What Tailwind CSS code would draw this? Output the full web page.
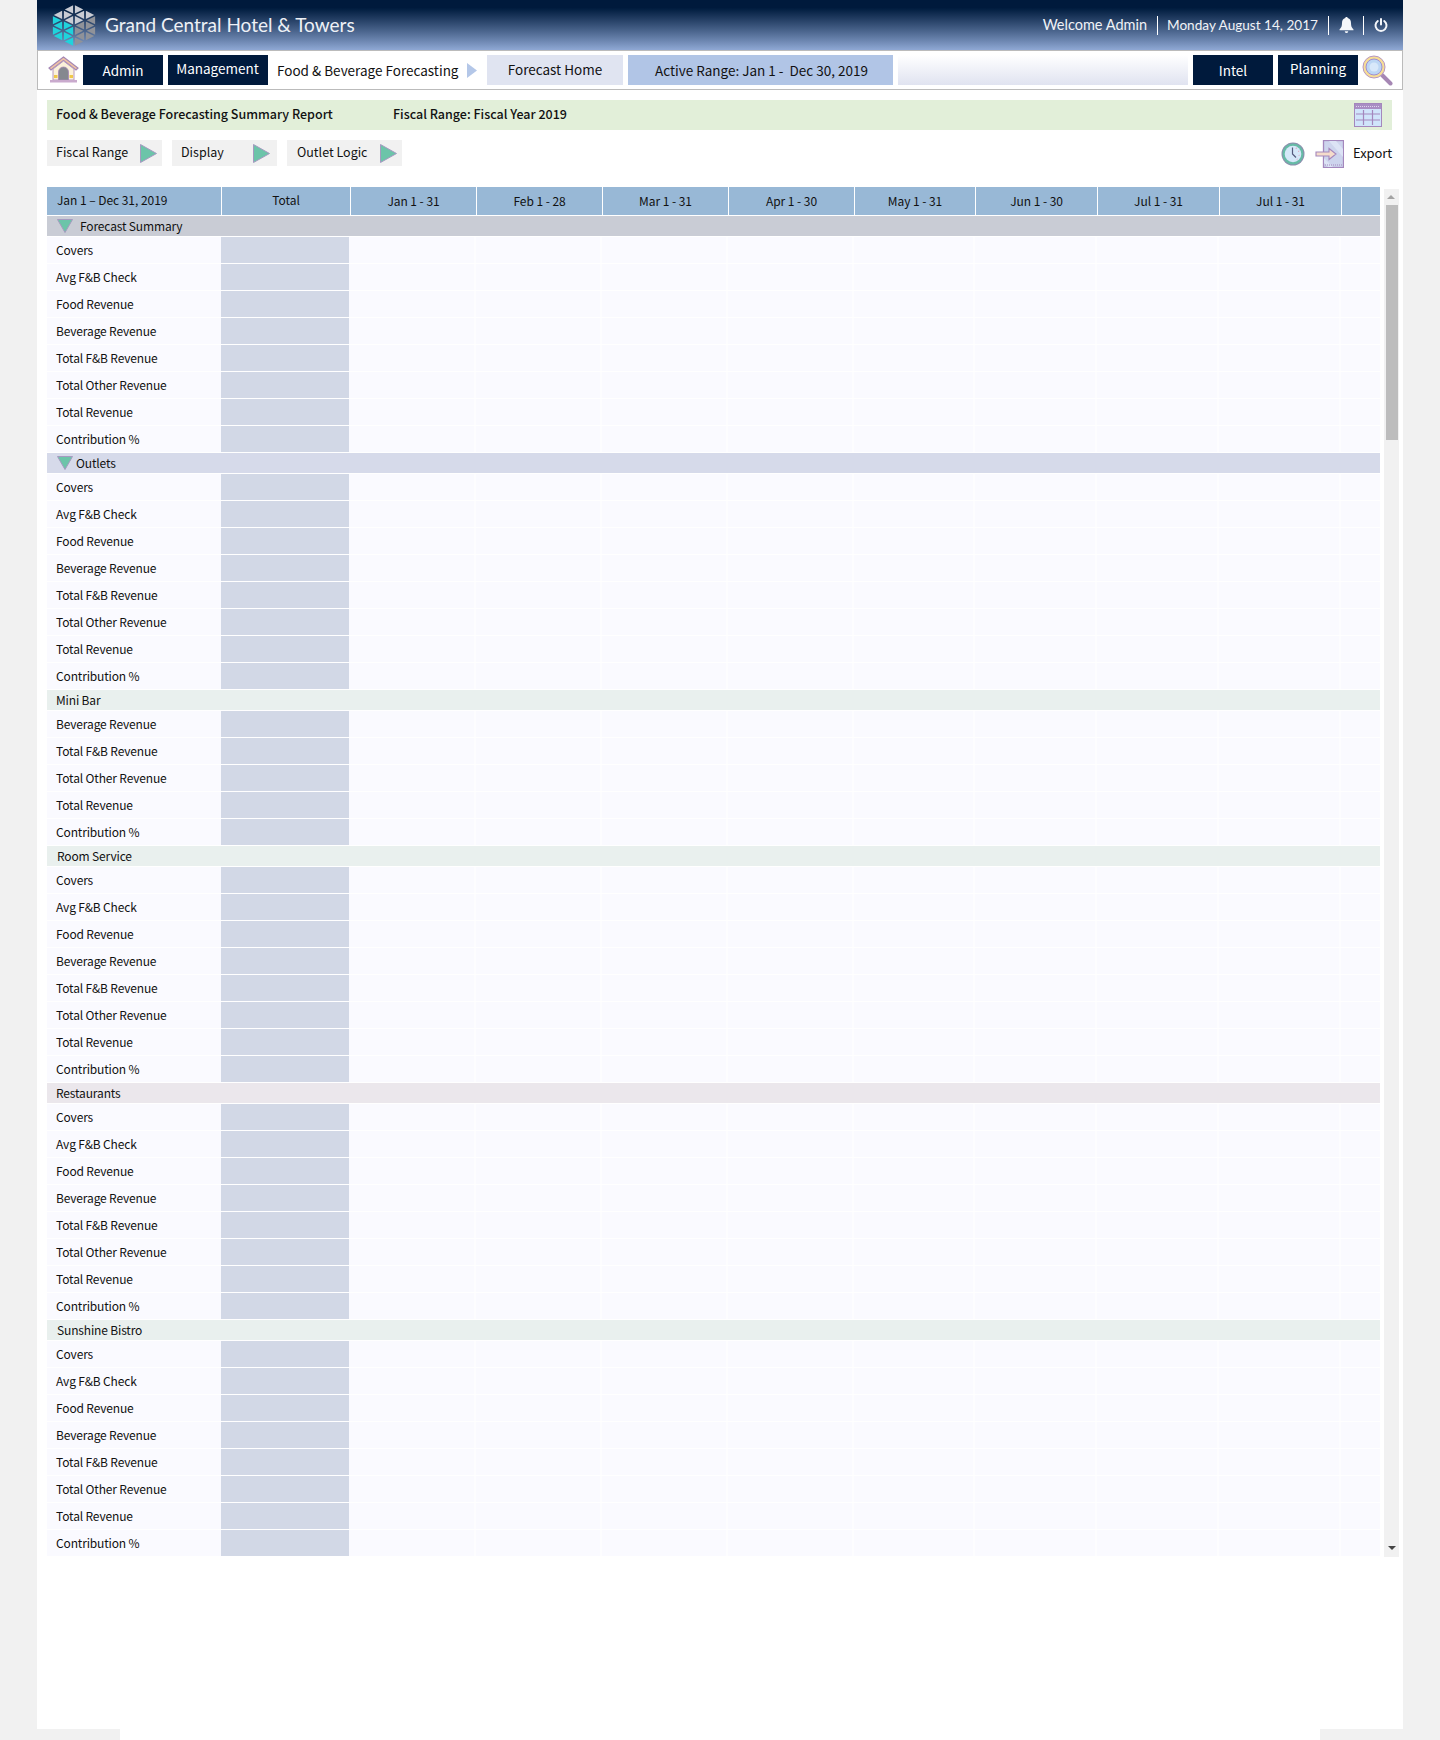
<!DOCTYPE html>
<html lang="en">
<head>
  <meta charset="UTF-8" />
  <title>Food & Beverage Forecasting Summary Report</title>
  <script src="https://cdn.jsdelivr.net/npm/@tailwindcss/browser@4"></script>
</head>
<body class="bg-[#f1f1f1] font-['Noto_Sans_CJK_SC','Noto_Sans',sans-serif] text-[12.5px] text-[#111]">
  <div class="mx-auto w-[1366px] h-[1740px] bg-white relative overflow-hidden">

    <!-- top banner -->
    <header class="h-[50px] bg-gradient-to-b from-[#001a3c] from-[15%] to-[#8fa8d4] flex items-center pl-[15px] pr-[15px] text-white">
      <svg id="logo" width="44" height="43" viewBox="0 0 44 43" class="shrink-0 mt-[1px]"></svg>
      <span class="ml-[9px] font-['Lato',sans-serif] text-[19px] text-[#eef1f6]">Grand Central Hotel &amp; Towers</span>
      <div class="ml-auto flex items-center font-['Lato',sans-serif] text-[14.5px] text-[#f0f2f6]">
        <span class="pr-[10px]">Welcome Admin</span>
        <span class="border-l border-white w-[171px] pl-[9px] h-[19px] leading-[19px] text-[13.6px] whitespace-nowrap">Monday August 14, 2017</span>
        <span class="border-l border-white h-[19px] w-[35px] flex items-center justify-center">
          <svg width="15" height="16" viewBox="0 0 15 16" fill="#f4f6fa"><path d="M7.5 0c.8 0 1.2.5 1.2 1.1C11 1.700 12 3.600 12 6c0 3 .6 4.600 2.500 6.500v.8H.5v-.8C2.400 10.600 3 9 3 6c0-2.400 1-4.300 3.300-4.900C6.300.5 6.700 0 7.500 0zM5.800 14.200h3.400c0 1-.8 1.800-1.700 1.800s-1.700-.8-1.700-1.800z"/></svg>
        </span>
        <span class="border-l border-white h-[19px] w-[25px] flex items-center justify-end">
          <svg width="14" height="14" viewBox="0 0 14 14" fill="none" stroke="#f4f6fa" stroke-width="2" stroke-linecap="round"><path d="M7 1v5.500M3.800 3A5.500 5.500 0 1 0 10.200 3"/></svg>
        </span>
      </div>
    </header>

    <!-- nav -->
    <nav class="h-[40px] border border-[#bbb] flex gap-[5px] pt-[4px] text-[13.5px]">
      <svg width="31" height="27" viewBox="0 0 31 27" class="ml-[10px] mr-[-1px] mt-[1px] shrink-0">
        <path d="M15.500 1L1 12l2 2L15.500 4.500 28 14l2-2z" fill="#f0c3a4" stroke="#a487b5" stroke-width="1.200"/>
        <path d="M5 13L15.500 5 26 13v11H5z" fill="#fbf1d9" stroke="#b79ac0"/>
        <path d="M10.500 24v-8a5 5 0 0 1 10 0v8z" fill="#85888f" stroke="#a487b5" stroke-width=".8"/>
        <rect x="6" y="19" width="3.500" height="3" fill="#efc84a"/><rect x="21.500" y="19" width="3.500" height="3" fill="#efc84a"/>
        <rect x="2" y="24" width="27" height="2.500" fill="#c9aacd"/>
      </svg>
      <a class="w-[80px] h-[30px] bg-[#001a3c] text-white flex items-center justify-center">Admin</a>
      <a class="w-[100px] h-[30px] bg-[#001a3c] text-white flex items-center justify-center pb-[3px] pr-[1px]">Management</a>
      <span class="ml-[4px] w-[185px] h-[30px] flex items-center whitespace-nowrap">Food &amp; Beverage Forecasting</span>
      <svg width="10" height="15" viewBox="0 0 10 15" class="mt-[8px] shrink-0"><path d="M0 0l10 7.500L0 15z" fill="#b4c7e8"/></svg>
      <span class="ml-[5px] w-[136px] h-[30px] bg-[#e0e4f1] flex items-center justify-center pb-[1px]">Forecast Home</span>
      <span class="w-[265px] h-[30px] bg-[#b1c5e6] flex items-center justify-center pl-[2px]">Active Range: Jan 1 -&nbsp; Dec 30, 2019</span>
      <div class="w-[290px] h-[30px] bg-gradient-to-b from-white to-[#e0e3f0]"></div>
      <a class="w-[80px] h-[30px] bg-[#001a3c] text-white flex items-center justify-center">Intel</a>
      <a class="w-[80px] h-[30px] bg-[#001a3c] text-white flex items-center justify-center pb-[3px]">Planning</a>
      <svg width="31" height="31" viewBox="0 0 31 31" class="shrink-0 ml-[-1px]">
        <path d="M20 20l8.500 8.500" stroke="#a687b4" stroke-width="4" stroke-linecap="round"/>
        <circle cx="12" cy="12" r="11" fill="#f7de94" stroke="#b596c4"/>
        <circle cx="12" cy="12" r="8" fill="#bcd6f4" stroke="#a08fd0"/>
        <circle cx="12" cy="12" r="4.500" fill="#d8e8fa"/>
      </svg>
    </nav>

    <div class="mt-[10px] mx-[10px] h-[30px] w-[1345px] bg-[#e2efd9] flex items-center pl-[9px] pr-[10px] pb-[1px] font-medium">
      <span class="w-[337px]">Food &amp; Beverage Forecasting Summary Report</span>
      <span>Fiscal Range: Fiscal Year 2019</span>
      <svg width="28" height="24" viewBox="0 0 28 24" class="ml-auto mt-[1px]">
        <rect x=".5" y=".5" width="27" height="23" fill="#d0e4fb" stroke="#a487bd"/>
        <rect x="1" y="1" width="26" height="5" fill="#a98fc4"/>
        <path d="M2 3.500h24" stroke="#e0d4ee" stroke-dasharray="1 1"/>
        <path d="M2 11h24M2 17h24M9.500 7v15M18.500 7v15" stroke="#a487bd" stroke-width="1.200"/>
      </svg>
    </div>

    <!-- filters and export -->
    <div class="mt-[10px] mx-[10px] w-[1345px] h-[26px] flex gap-[10px] relative">
      <div class="w-[115px] h-[26px] bg-[#f1f1f1] flex items-center pl-[9px] pb-[2px] relative">Fiscal Range
        <svg width="17" height="19" viewBox="0 0 17 19" class="absolute right-[5px] top-[4px]"><path d="M.5.5l16 9-16 9z" fill="#6cc4a9" stroke="#a59ac0"/></svg>
      </div>
      <div class="w-[105px] h-[26px] bg-[#f1f1f1] flex items-center pl-[9px] pb-[2px] relative">Display
        <svg width="17" height="19" viewBox="0 0 17 19" class="absolute right-[7px] top-[4px]"><path d="M.5.5l16 9-16 9z" fill="#6cc4a9" stroke="#a59ac0"/></svg>
      </div>
      <div class="w-[115px] h-[26px] bg-[#f1f1f1] flex items-center pl-[10px] pb-[2px] relative">Outlet Logic
        <svg width="17" height="19" viewBox="0 0 17 19" class="absolute right-[5px] top-[4px]"><path d="M.5.5l16 9-16 9z" fill="#6cc4a9" stroke="#a59ac0"/></svg>
      </div>
      <div class="ml-auto flex items-center text-[13px] tracking-[-0.1px]">
        <svg width="24" height="24" viewBox="0 0 24 24" class="mr-[10px] mt-[1px]">
          <circle cx="12" cy="12" r="11.500" fill="#8d8fae"/>
          <circle cx="12" cy="12" r="10.500" fill="#66bba6"/>
          <circle cx="12" cy="12" r="8.300" fill="#d5e8f9"/>
          <path d="M15 6l.5.5M17.500 9l.5.5M18 13l.3.5M16 17l.3.3" stroke="#e58aa0" stroke-width="1.200"/>
          <path d="M11.500 5.500V12l3.500 3.500" stroke="#555b7d" fill="none" stroke-width="1.200"/>
        </svg>
        <svg width="29" height="28" viewBox="0 0 29 28" class="mr-[9px] mt-[2px]">
          <rect x="8.500" y=".5" width="20" height="27" fill="#cdd4ed" stroke="#a487bd" stroke-width="1.300"/>
          <path d="M14 1l14 16v-8L21 1zM9 18L18 27h-5L9 23z" fill="#dce3f5"/>
          <path d="M10 25h17" stroke="#a487bd" stroke-dasharray="1 1"/>
          <path d="M1 12h13V8.500l7 5.500-7 5.500V16H1z" fill="#f5dccb" stroke="#a487bd" stroke-width="1.100"/>
        </svg>
        <span>Export</span>
      </div>
    </div>

    <!-- report table -->
    <div class="mt-[21px] ml-[10px] flex">
      <div id="report" class="w-[1333px]">
        <div class="grid grid-cols-[175px_129px_126px_126px_126px_126px_121px_122px_122px_122px_38px] h-[28px] mb-[1px] bg-[#98b8d6] text-center text-[12px] tracking-[-0.05px]">
          <div class="border-r border-white text-left pl-[10px] leading-[25px]">Jan 1 – Dec 31, 2019</div>
          <div class="border-r border-white leading-[25px]">Total</div>
          <div class="border-r border-white leading-[27px]">Jan 1 - 31</div>
          <div class="border-r border-white leading-[28px]">Feb 1 - 28</div>
          <div class="border-r border-white leading-[27px]">Mar 1 - 31</div>
          <div class="border-r border-white leading-[27px]">Apr 1 - 30</div>
          <div class="border-r border-white leading-[27px]">May 1 - 31</div>
          <div class="border-r border-white leading-[27px]">Jun 1 - 30</div>
          <div class="border-r border-white leading-[27px]">Jul 1 - 31</div>
          <div class="border-r border-white leading-[27px]">Jul 1 - 31</div>
          <div></div>
        </div>
      </div>
      <!-- scrollbar -->
      <div class="ml-[4px] mt-[2px] w-[15px] h-[1368px] bg-[#f1f1f1] relative">
        <div class="absolute left-[3px] top-[6px] w-0 h-0 border-x-[4px] border-x-transparent border-b-[4px] border-b-[#a3a3a3]"></div>
        <div class="absolute left-[2px] top-[16px] w-[12px] h-[235px] bg-[#bdbdbd]"></div>
        <div class="absolute left-[4px] bottom-[7px] w-0 h-0 border-x-[4px] border-x-transparent border-t-[4px] border-t-[#444]"></div>
      </div>
    </div>

    <!-- footer corners -->
    <div class="absolute left-0 bottom-0 w-[83px] h-[11px] bg-[#f1f1f1]"></div>
    <div class="absolute right-0 bottom-0 w-[83px] h-[11px] bg-[#f1f1f1]"></div>
  </div>

  <script>
    const full = ['Covers', 'Avg F&B Check', 'Food Revenue', 'Beverage Revenue', 'Total F&B Revenue', 'Total Other Revenue', 'Total Revenue', 'Contribution %'];
    const short = full.slice(3);

    const arrow = '<svg width="16" height="14" viewBox="0 0 16 14" class="ml-[10px] shrink-0"><path d="M.5.5h15L8 13.500z" fill="#6cc4a9" stroke="#a59ac0"/></svg>';

    const sections = [
      { name: 'Forecast Summary', cls: 'bg-[#c9ccd5]', open: true, gap: 'ml-[7px]', rows: full },
      { name: 'Outlets', cls: 'bg-[#d6daea]', open: true, gap: 'ml-[3px]', rows: full },
      { name: 'Mini Bar', cls: 'bg-[#e9f0ee]', gap: 'pl-[9px]', rows: short },
      { name: 'Room Service', cls: 'bg-[#e9f0ee]', gap: 'pl-[10px]', rows: full },
      { name: 'Restaurants', cls: 'bg-[#ebe7ec]', gap: 'pl-[9px]', rows: full },
      { name: 'Sunshine Bistro', cls: 'bg-[#e9f0ee]', gap: 'pl-[10px]', rows: full }
    ];

    // month cells are empty, only a faint white line between them
    const blanks = '<div class="border-r-2 border-white/50"></div>'.repeat(8) + '<div></div><div></div>';

    const row = (label) => `
      <div class="grid grid-cols-[174px_128px_127px_126px_126px_126px_121px_122px_122px_122px_39px] h-[26px] mb-[1px] bg-[#fafaff] text-[12px] tracking-[-0.15px]">
        <div class="pl-[9px] leading-[25px]">${label.replace('&', '&amp;')}</div>
        <div class="bg-[#d2d8e6]"></div>
        ${blanks}
      </div>`;

    document.getElementById('report').innerHTML += sections.map(s => `
      <div class="${s.cls} h-[20px] mb-[1px] flex items-center text-[12px] tracking-[-0.15px]">
        ${s.open ? arrow : ''}
        <span class="${s.gap}">${s.name}</span>
      </div>
      ${s.rows.map(row).join('')}`).join('');

    // logo: hexagon cut into 6 sectors of 4 small triangles each
    const c = [22, 21.5];
    const hex = [[22, 0], [44, 11], [44, 32], [22, 43], [0, 32], [0, 11]];
    const colors = ['#c9ccd4', '#8f9299', '#8f9299', '#1fd3dc', '#1fd3dc', '#c9ccd4'];
    const mid = (a, b) => [(a[0] + b[0]) / 2, (a[1] + b[1]) / 2];
    const tri = (pts, fill) => {
      const cx = (pts[0][0] + pts[1][0] + pts[2][0]) / 3;
      const cy = (pts[0][1] + pts[1][1] + pts[2][1]) / 3;
      const p = pts.map(q => `${cx + (q[0] - cx) * 0.76},${cy + (q[1] - cy) * 0.76}`).join(' ');
      return `<polygon points="${p}" fill="${fill}"/>`;
    };
    document.getElementById('logo').innerHTML = hex.map((a, i) => {
      const b = hex[(i + 1) % 6];
      const ab = mid(a, b), ac = mid(a, c), bc = mid(b, c);
      return tri([a, ab, ac], colors[i]) + tri([ab, b, bc], colors[i]) + tri([ac, bc, c], colors[i]) + tri([ab, ac, bc], colors[i]);
    }).join('');
  </script>
</body>
</html>
